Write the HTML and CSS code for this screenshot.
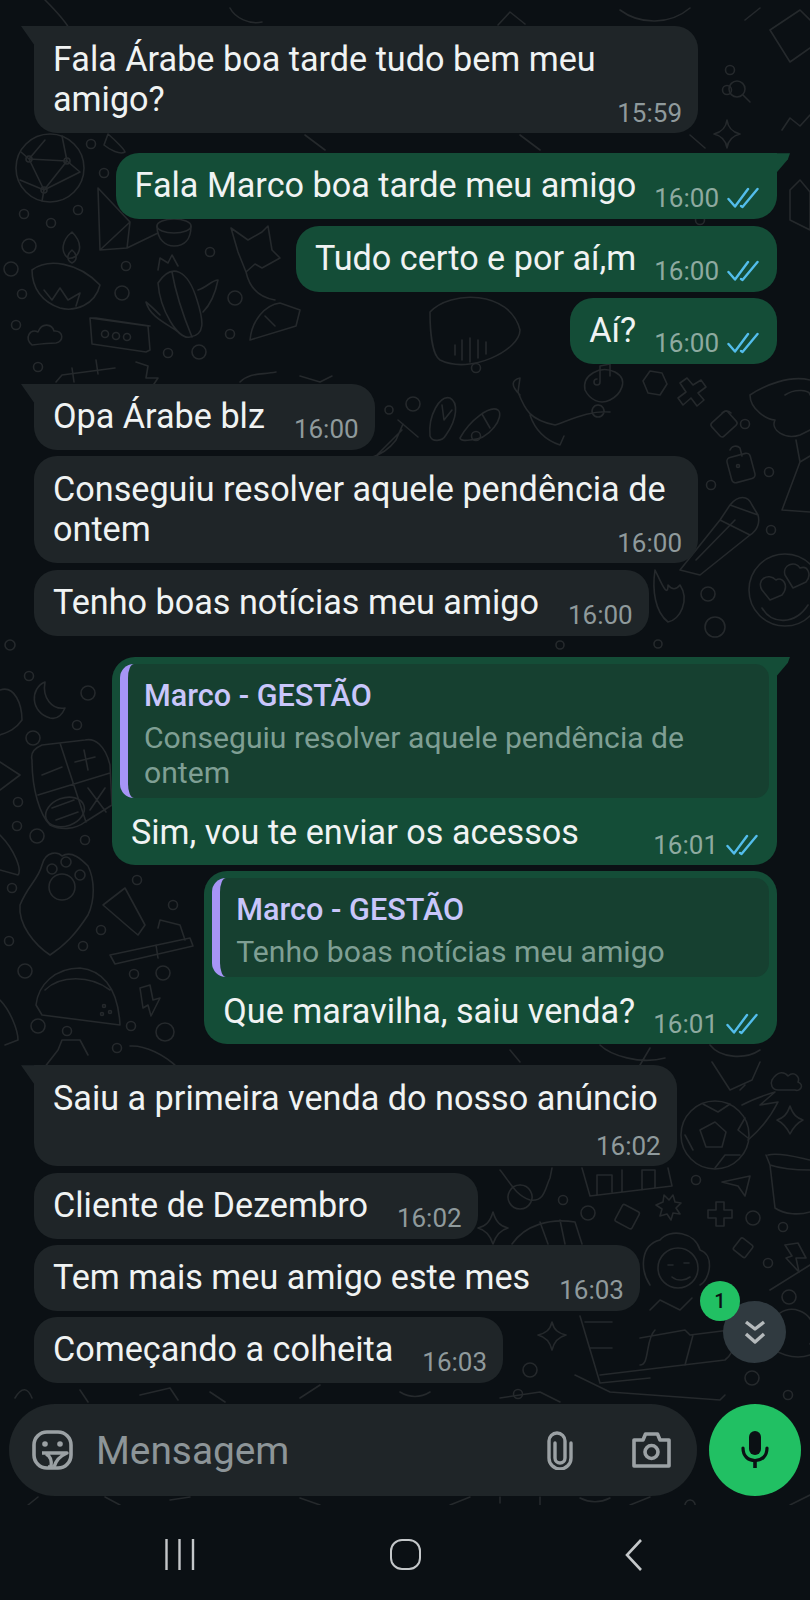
FILE: index.html
```html
<!DOCTYPE html>
<html lang="pt">
<head>
<meta charset="utf-8">
<title>Conversa</title>
<link rel="stylesheet" href="styles.css">
</head>
<body>
<svg width="0" height="0" class="defs">
  <symbol id="ticks" viewBox="0 0 32 22"><path d="M1.5 12 L8 19.5 L21 2 M14 19 L15.5 20 L30.5 2" fill="none" stroke="#53bdeb" stroke-width="2.4" stroke-linecap="round" stroke-linejoin="round"/></symbol>
</svg>
<div class="screen">
  <div class="stage">
    <svg class="wallpaper" viewBox="0 0 810 1505" width="810" height="1505" aria-hidden="true">
      <g fill="none" stroke="#25292c" stroke-width="1.6" stroke-linecap="round" stroke-linejoin="round">
        <!-- small dots -->
        <circle cx="91" cy="144" r="4.5"/><circle cx="104" cy="173" r="4.5"/><circle cx="78" cy="210" r="4.5"/><circle cx="24" cy="214" r="4.5"/><circle cx="51" cy="223" r="4.5"/><circle cx="29" cy="246" r="7"/><circle cx="11" cy="269" r="7"/><circle cx="22" cy="294" r="4.5"/><circle cx="16" cy="325" r="4.5"/><circle cx="38" cy="367" r="4.5"/><circle cx="126" cy="266" r="4.5"/><circle cx="122" cy="293" r="7"/><circle cx="210" cy="252" r="4.5"/><circle cx="235" cy="298" r="7"/><circle cx="230" cy="334" r="4.5"/><circle cx="168" cy="353" r="4.5"/><circle cx="199" cy="352" r="7"/>
        <circle cx="413" cy="404" r="7"/><circle cx="389" cy="410" r="4"/><circle cx="476" cy="368" r="4.5"/><circle cx="476" cy="436" r="4.5"/><circle cx="745" cy="424" r="4.5"/><circle cx="769" cy="472" r="4.5"/><circle cx="711" cy="485" r="4.5"/><circle cx="771" cy="530" r="4.5"/><circle cx="708" cy="594" r="7"/><circle cx="715" cy="627" r="10"/><circle cx="560" cy="645" r="4"/><circle cx="658" cy="644" r="4"/>
        <circle cx="10" cy="645" r="5"/><circle cx="29" cy="676" r="4.5"/><circle cx="88" cy="693" r="7"/><circle cx="77" cy="725" r="4.5"/><circle cx="33" cy="738" r="7"/><circle cx="18" cy="802" r="4.5"/><circle cx="17" cy="826" r="4.5"/><circle cx="37" cy="836" r="7"/><circle cx="85" cy="840" r="4.5"/><circle cx="137" cy="880" r="4.5"/><circle cx="173" cy="905" r="4.5"/><circle cx="12" cy="888" r="4.5"/><circle cx="101" cy="930" r="4.5"/><circle cx="9" cy="941" r="4.5"/><circle cx="83" cy="946" r="4.5"/><circle cx="25" cy="971" r="7"/><circle cx="134" cy="974" r="4.5"/><circle cx="163" cy="973" r="7"/><circle cx="38" cy="1026" r="7"/><circle cx="67" cy="1031" r="4.5"/><circle cx="131" cy="1026" r="4.5"/><circle cx="165" cy="1032" r="9"/><circle cx="117" cy="1048" r="4.5"/>
        <circle cx="696" cy="1180" r="4.5"/><circle cx="563" cy="1200" r="4.5"/><circle cx="588" cy="1213" r="7"/><circle cx="753" cy="1218" r="7"/><circle cx="783" cy="1227" r="4.5"/><circle cx="768" cy="1263" r="4.5"/><circle cx="789" cy="1297" r="7"/><circle cx="530" cy="1370" r="7"/><circle cx="518" cy="1394" r="4.5"/><circle cx="752" cy="1378" r="7"/><circle cx="788" cy="1395" r="4.5"/>
        <circle cx="727" cy="90" r="4.5"/><circle cx="730" cy="70" r="4.5"/><circle cx="700" cy="220" r="4.5"/>
        <!-- globe -->
        <circle cx="50" cy="168" r="34"/><path d="M29 159 L67 161 M20 180 L44 190 L80 172 M29 159 L44 190 M67 161 L44 190 M29 159 L21 152 M29 159 L45 140 M67 161 L62 136 M67 161 L80 172 M44 190 L42 201"/>
        <circle cx="29" cy="159" r="3"/><circle cx="67" cy="161" r="3"/><circle cx="44" cy="190" r="3"/>
        <!-- play triangle and bowl -->
        <path d="M98 188 L130 222 L127 248 L100 250 Z M100 250 L130 222 M127 248 L158 233"/>
        <ellipse cx="174" cy="226" rx="17" ry="7"/><path d="M157 226 C157 240 166 246 174 246 C184 246 191 240 191 226"/>
        <!-- lamp -->
        <path d="M72 232 C62 240 60 252 68 258 C78 260 86 246 72 232 Z M72 250 C67 254 66 260 72 263 C78 260 77 254 72 250 Z"/>
        <path d="M32 270 C48 258 78 262 100 285 C95 305 75 312 60 308 C42 302 32 288 32 270 Z M44 290 L52 300 L60 288 L68 300 L80 293 L76 306"/>
        <!-- cactus -->
        <path d="M158 283 C172 262 188 270 197 300 C204 322 205 335 190 337 C178 340 160 310 158 283 Z M172 272 C176 295 185 320 192 337 M160 315 C155 310 150 305 146 302 C150 318 170 325 178 332 M198 290 C206 288 212 280 218 280 C215 295 210 305 203 312 M158 270 L160 258 L168 263 L172 255 L178 266"/>
        <!-- fox -->
        <path d="M231 228 L248 240 L262 232 L268 226 L272 250 L280 258 L262 268 L255 264 L246 272 L242 262 L238 252 Z M246 272 C250 290 262 298 275 300"/>
        <!-- tail -->
        <path d="M250 340 C252 320 265 305 280 303 L300 310 L296 326 Z M265 316 L275 326"/>
        <!-- chat box -->
        <path d="M90 318 L148 326 L150 350 L146 352 L92 344 Z M90 318 L96 318 L150 326"/><circle cx="105" cy="334" r="3.5"/><circle cx="116" cy="336" r="3.5"/><circle cx="127" cy="337" r="3.5"/>
        <!-- cloud -->
        <path d="M32 345 C24 338 30 328 38 332 C42 322 52 324 54 331 C64 330 64 342 56 343 C48 343 40 344 32 345 Z"/>
        <!-- weights, bolt, lower strip -->
        <path d="M56 382 L62 375 L115 368 M72 368 l2 14 M96 360 l2 14"/><path d="M136 362 L148 366 L146 378 L158 378 L150 390"/>
        <path d="M240 382 C250 372 262 375 276 372 M300 376 L320 382 L332 376"/>
        <!-- audio + note -->
        <path d="M430 312 C450 290 510 290 520 330 C520 350 470 375 440 360 C432 355 430 330 430 312 Z M455 345 v10 M462 340 v20 M470 338 v24 M478 340 v18 M486 342 v12"/><path d="M600 382 v-16 l10 -2 v12 M600 382 a3 3 0 1 1 -3 -3"/>
        <!-- flip flops, flask -->
        <path d="M430 436 C428 415 440 395 450 398 C458 402 458 418 446 435 C442 442 432 442 430 436 Z M442 405 L444 420 L452 410"/><path d="M460 438 C470 420 490 405 498 410 C505 416 490 440 470 440 C464 441 460 440 460 438 Z M482 414 L490 428"/>
        <path d="M377 455 L402 430 M398 420 L418 437 M403 424 L396 440 C390 448 380 455 370 458"/>
        <!-- person arm -->
        <path d="M520 395 C510 385 512 380 520 378 L518 392 C525 410 530 420 555 425 C570 420 590 410 610 412 M530 415 C535 430 545 440 560 445 L564 436 M585 390 C582 375 600 365 615 372 C630 380 620 395 610 400 C600 405 590 400 585 390 Z M598 405 a6 6 0 1 0 0.1 0"/>
        <!-- hexagon, cross -->
        <path d="M643 381 L650 371 L662 373 L667 384 L660 395 L648 393 Z"/>
        <path d="M680 383 l7 -5 l6 7 l8 -5 l5 7 l-8 6 l6 7 l-7 6 l-6 -8 l-8 7 l-5 -7 l8 -6 Z"/>
        <!-- locks -->
        <rect x="713" y="415" width="22" height="18" rx="3" transform="rotate(-42 724 424)"/><path d="M722 413 a6 6 0 0 1 9 0"/>
        <rect x="729" y="455" width="24" height="26" rx="4" transform="rotate(-15 741 468)"/><path d="M730 450 a6 6 0 0 1 10 -2 l2 8"/><circle cx="738" cy="466" r="1.5"/>
        <!-- flower -->
        <path d="M810 380 C790 375 765 385 750 395 C750 410 768 420 775 420 C770 430 785 440 800 435 L810 430 M785 395 C795 388 810 390 810 395 M796 440 L800 462 L782 510 L810 512 M800 462 L810 456"/>
        <!-- pencil -->
        <path d="M680 570 L720 520 L730 505 C738 495 748 495 752 505 L758 515 C760 522 758 530 750 535 L700 575 L680 570 Z M720 520 L750 535 M730 505 L758 515 M696 560 L735 520"/>
        <!-- heart smiley -->
        <circle cx="785" cy="590" r="36"/><path d="M762 590 C756 580 768 572 776 580 C782 576 790 585 782 595 L770 600 Z M785 575 C782 565 795 560 800 568 C808 565 812 575 806 582 L793 588 Z M762 608 C772 625 795 625 808 605"/>
        <!-- flame -->
        <path d="M655 570 C652 590 655 612 668 622 C680 620 690 600 680 585 C676 590 672 590 668 585 C668 600 660 580 655 570 Z"/>
        <!-- moon -->
        <path d="M45 682 C30 688 30 712 50 718 C58 720 62 715 65 708 C52 710 42 698 45 682 Z"/>
        <!-- calculator -->
        <path d="M32 760 C30 752 35 748 42 745 L85 740 C95 738 105 745 110 765 L112 805 L85 822 C75 830 60 830 50 825 C40 815 32 790 32 760 Z M60 743 L86 822 M38 795 L110 773 M42 775 L62 767 M75 762 L95 757 M84 750 L88 770 M88 788 L106 812 M105 788 L90 810"/>
        <ellipse cx="65" cy="812" rx="20" ry="14" transform="rotate(-20 65 812)"/><path d="M52 808 L74 800 M56 820 L78 812"/>
        <!-- left scraps -->
        <path d="M0 690 C15 685 22 705 22 720 C15 730 8 732 0 735"/><path d="M0 762 L20 775 L0 790"/><path d="M0 835 C15 850 22 870 18 875 L0 870"/><path d="M0 1000 C10 1010 18 1030 18 1040 L5 1045"/>
        <!-- paw -->
        <path d="M20 905 C28 885 38 880 42 865 C46 850 58 852 62 856 C72 850 82 860 88 866 C95 880 95 900 88 915 C75 935 65 945 50 955 C35 945 18 925 20 905 Z"/><circle cx="62" cy="887" r="13"/><circle cx="52" cy="869" r="5"/><circle cx="66" cy="862" r="5"/><circle cx="80" cy="875" r="5"/>
        <!-- toothpaste -->
        <path d="M103 905 L125 888 L145 925 L138 935 L132 930 Z"/><path d="M110 955 L190 938 L193 946 L115 964 Z M156 945 L158 958 M158 928 L160 920 L180 925 L185 940"/>
        <!-- taco -->
        <path d="M36 1005 C38 985 55 968 80 968 C100 970 118 985 120 1025 L42 1015 Z M45 990 C60 975 90 975 110 990"/><circle cx="104" cy="1006" r="1.5"/><circle cx="110" cy="1012" r="1.5"/><circle cx="102" cy="1014" r="1.5"/>
        <!-- bolt -->
        <path d="M140 988 L150 985 L153 1000 L160 998 L151 1016 L148 1005 L143 1008 Z"/>
        <!-- lower left scrap -->
        <path d="M44 1068 L58 1050 L62 1040 L80 1040 L88 1055 M130 1046 C145 1045 165 1055 178 1068"/>
        <!-- right top -->
        <path d="M770 30 L800 10 L810 20 M770 30 L790 62 L810 48"/><circle cx="737" cy="89" r="8"/><path d="M743 95 L750 102"/><path d="M727 120 C728 128 732 132 740 134 C732 136 728 140 727 148 C726 140 722 136 714 134 C722 132 726 128 727 120 Z"/><path d="M782 130 L790 118 L800 126 L810 115 M735 165 L752 158 L755 170 M790 190 L800 180 L810 192 L810 230 L790 220 Z"/>
        <!-- top -->
        <path d="M70 30 C65 20 50 5 45 0 M230 8 C235 18 250 25 262 22 M498 25 L510 12 L525 24 M620 10 C640 25 670 25 690 8 M745 20 L760 8"/>
        <!-- between bubbles -->
        <path d="M108 134 C115 140 125 150 125 152 C120 155 110 150 104 145 Z M305 135 L325 150 M520 135 L540 150 M690 135 L705 148"/>
        <!-- football -->
        <circle cx="715" cy="1135" r="34"/><path d="M700 1130 L715 1122 L726 1132 L722 1147 L706 1147 Z M703 1104 L718 1112 L730 1104 M745 1118 L738 1130 L748 1138 M685 1135 L693 1150 M715 1168 L725 1155 L740 1155"/><path d="M742 1105 C755 1098 765 1095 775 1092 L760 1105 L778 1102 C770 1118 760 1130 748 1140"/>
        <!-- sparkle, plane, pot -->
        <path d="M790 1106 C793 1115 797 1118 803 1120 C797 1123 793 1128 790 1134 C787 1128 783 1123 777 1120 C783 1118 787 1115 790 1106 Z"/>
        <path d="M722 1182 L750 1176 L745 1196 L738 1186 Z"/><path d="M768 1155 C780 1152 800 1158 810 1160 M766 1155 L770 1165 C785 1170 800 1170 810 1170 M770 1165 L775 1208 C785 1215 800 1215 810 1212"/>
        <path d="M664 1195 l5 5 l4 -5 l2 7 l6 1 l-5 5 l4 6 l-7 -1 l-2 7 l-4 -6 l-7 2 l2 -7 l-6 -4 l7 -3 Z"/>
        <path d="M708 1210 h8 v-8 h8 v8 h8 v8 h-8 v8 h-8 v-8 h-8 Z"/>
        <rect x="736" y="1240" width="15" height="15" rx="2" transform="rotate(38 743 1247)"/><path d="M785 1245 L798 1243 L806 1258 L796 1258 L799 1272 L786 1258 L792 1256 Z"/><rect x="618" y="1207" width="19" height="19" rx="2" transform="rotate(28 627 1216)"/>
        <!-- person and laptop -->
        <path d="M650 1285 C640 1270 640 1245 660 1240 C670 1228 695 1232 700 1250 C715 1255 710 1280 700 1285"/><circle cx="678" cy="1268" r="20"/><path d="M668 1265 l5 0 M684 1263 l5 0 M672 1277 C678 1282 686 1280 690 1277"/><path d="M650 1310 L660 1300 L680 1310 L692 1298 M655 1330 C645 1340 650 1365 640 1365 M600 1375 L725 1360 C738 1350 735 1330 730 1330 L690 1335 L685 1330 L640 1338 M580 1316 L600 1383 L650 1378 M585 1322 H612 M590 1348 H612 M693 1335 L685 1365 M575 1375 L610 1392 L720 1400 L725 1395"/>
        <!-- stars, house, egg, croissant -->
        <path d="M552 1322 C554 1330 558 1333 566 1335 C558 1337 554 1342 552 1350 C550 1342 546 1337 538 1335 C546 1333 550 1330 552 1322 Z"/><path d="M493 1212 C496 1222 500 1226 508 1228 C500 1230 496 1235 493 1244 C490 1235 486 1230 478 1228 C486 1226 490 1222 493 1212 Z"/>
        <path d="M582 1168 L590 1196 L672 1186 L668 1168 M597 1194 V1175 H612 V1192 M622 1192 V1170 M642 1190 V1170 H655 V1188"/>
        <path d="M500 1170 C510 1182 515 1195 530 1200 C545 1202 545 1188 550 1178 L552 1168 M520 1185 a12 12 0 1 0 0.1 0"/>
        <path d="M512 1244 C525 1225 550 1218 575 1222 L582 1244 M540 1222 L548 1244 M560 1220 L565 1244"/>
        <!-- right of bubble 12 -->
        <path d="M770 1330 a22 22 0 1 1 40 14 M778 1330 a4 4 0 1 0 0.1 0"/><path d="M764 1340 C775 1355 795 1360 810 1355"/>
        <path d="M770 1290 L810 1265 M600 1045 C610 1055 640 1065 665 1058 M510 1050 L520 1062 M640 1065 L650 1048 M710 1045 C720 1058 745 1060 760 1050 M712 1062 L730 1090 L752 1080 L760 1062 M745 1085 L740 1090"/><path d="M772 1080 C778 1070 785 1072 788 1076 C795 1070 800 1078 798 1082 C805 1085 800 1092 795 1090 L778 1090 C772 1090 770 1084 772 1080 Z"/>
        <!-- gap strip above composer -->
        <path d="M15 1398 C22 1386 28 1388 32 1398 M80 1390 L88 1402 M140 1395 L170 1388 L178 1400 M210 1392 L225 1402 M300 1398 L320 1385 M400 1392 C410 1398 420 1398 430 1392 M500 1398 L540 1392 L560 1402"/>
        <path d="M28 1505 L38 1497 M120 1505 L105 1497 M170 1500 L190 1497 M320 1505 L300 1498 M450 1505 L470 1497 M500 1503 V1497 M540 1505 V1497 M580 1498 C590 1503 600 1503 610 1498 M630 1505 L650 1497 M690 1500 a5 5 0 1 0 0.1 0 M790 1505 L810 1495"/>
      </g>
    </svg>

    <main class="chat">
      <div class="msg in tail stack wide">
        <p class="text">Fala Árabe boa tarde tudo bem meu amigo?</p>
        <div class="meta over"><span class="time">15:59</span></div>
      </div>

      <div class="msg out tail row far">
        <p class="text">Fala Marco boa tarde meu amigo</p>
        <div class="meta"><span class="time">16:00</span><svg class="tick"><use href="#ticks"/></svg></div>
      </div>
      <div class="msg out row">
        <p class="text">Tudo certo e por aí,m</p>
        <div class="meta"><span class="time">16:00</span><svg class="tick"><use href="#ticks"/></svg></div>
      </div>
      <div class="msg out row">
        <p class="text">Aí?</p>
        <div class="meta"><span class="time">16:00</span><svg class="tick"><use href="#ticks"/></svg></div>
      </div>

      <div class="msg in tail row far">
        <p class="text">Opa Árabe blz</p>
        <div class="meta"><span class="time">16:00</span></div>
      </div>
      <div class="msg in stack wide">
        <p class="text">Conseguiu resolver aquele pendência de ontem</p>
        <div class="meta over"><span class="time">16:00</span></div>
      </div>
      <div class="msg in row">
        <p class="text">Tenho boas notícias meu amigo</p>
        <div class="meta"><span class="time">16:00</span></div>
      </div>

      <div class="msg out tail reply far-more reply-wide">
        <div class="quote">
          <div class="quote-name">Marco - GESTÃO</div>
          <div class="quote-body">Conseguiu resolver aquele pendência de ontem</div>
        </div>
        <div class="reply-row">
          <p class="text">Sim, vou te enviar os acessos</p>
          <div class="meta"><span class="time">16:01</span><svg class="tick"><use href="#ticks"/></svg></div>
        </div>
      </div>
      <div class="msg out reply">
        <div class="quote">
          <div class="quote-name">Marco - GESTÃO</div>
          <div class="quote-body">Tenho boas notícias meu amigo</div>
        </div>
        <div class="reply-row">
          <p class="text">Que maravilha, saiu venda?</p>
          <div class="meta"><span class="time">16:01</span><svg class="tick"><use href="#ticks"/></svg></div>
        </div>
      </div>

      <div class="msg in tail stack far-more">
        <p class="text">Saiu a primeira venda do nosso anúncio</p>
        <div class="meta under"><span class="time">16:02</span></div>
      </div>
      <div class="msg in row">
        <p class="text">Cliente de Dezembro</p>
        <div class="meta"><span class="time">16:02</span></div>
      </div>
      <div class="msg in row">
        <p class="text">Tem mais meu amigo este mes</p>
        <div class="meta"><span class="time">16:03</span></div>
      </div>
      <div class="msg in row">
        <p class="text">Começando a colheita</p>
        <div class="meta"><span class="time">16:03</span></div>
      </div>
    </main>

    <footer class="composer">
      <div class="field">
        <svg class="ico sticker" viewBox="0 0 41 40"><rect x="2" y="2" width="37" height="36" rx="13" fill="none" stroke="#9ba1a4" stroke-width="3.6"/><circle cx="13" cy="14" r="2.8" fill="#9ba1a4"/><circle cx="28" cy="14" r="2.8" fill="#9ba1a4"/><path d="M10 23 H35 C28 26 24 30 22 37 M14 24 C18 26 20 31 19 37 L16 37" fill="none" stroke="#9ba1a4" stroke-width="3.4" stroke-linejoin="round"/></svg>
        <span class="placeholder">Mensagem</span>
        <svg class="ico clip" viewBox="0 0 26 39"><path d="M24 12 V27 A11 11 0 0 1 2 27 V10 A8 8 0 0 1 18 10 V27 A5 5 0 0 1 8 27 V12" fill="none" stroke="#9ba1a4" stroke-width="3.4" stroke-linecap="round"/></svg>
        <svg class="ico camera" viewBox="0 0 39 36"><path d="M2 8 H11 L13.500 2 H25.500 L28 8 H37 V34 H2 Z" fill="none" stroke="#9ba1a4" stroke-width="3.6" stroke-linejoin="round"/><circle cx="19.500" cy="20" r="6.500" fill="none" stroke="#9ba1a4" stroke-width="3.6"/></svg>
      </div>
      <button class="mic" type="button" aria-label="Gravar">
        <svg viewBox="0 0 28 38" width="28" height="38"><rect x="8" y="0" width="12" height="24" rx="6" fill="#0b1014"/><path d="M2 17 C2 25 7 29.500 14 29.500 C21 29.500 26 25 26 17" fill="none" stroke="#0b1014" stroke-width="3.200" stroke-linecap="round"/><path d="M14 29 V37" stroke="#0b1014" stroke-width="3.600"/></svg>
      </button>
    </footer>

    <div class="scroll-down">
      <svg viewBox="0 0 22 25" width="22" height="25"><path d="M2 2 L11 9 L20 2 M2 14 L11 22 L20 14" fill="none" stroke="#b5babc" stroke-width="3.400" stroke-linejoin="round"/></svg>
      <span class="badge">1</span>
    </div>
  </div>

  <nav class="navbar">
    <svg class="nav-recent" viewBox="0 0 31 31" width="31" height="31"><path d="M2.500 0 V31 M15.500 0 V31 M29 0 V31" stroke="#c4c7c9" stroke-width="2.400"/></svg>
    <span class="nav-home"></span>
    <svg class="nav-back" viewBox="0 0 18 32" width="18" height="32"><path d="M16 1 L2 16 L16 31" fill="none" stroke="#c4c7c9" stroke-width="2.600"/></svg>
  </nav>
</div>
</body>
</html>
```
FILE: styles.css
```css
* { box-sizing: border-box; }
html, body { margin: 0; padding: 0; background: #0b1014; }
body { font-family: Roboto, "Liberation Sans", sans-serif; color: #f0f3f3; }
.defs { position: absolute; }
.screen { width: 810px; height: 1600px; display: flex; flex-direction: column; overflow: hidden; background: #0b1014; }
.stage { position: relative; height: 1505px; flex: none; }
.wallpaper { position: absolute; left: 0; top: 0; display: block; }

.chat { position: relative; display: flex; flex-direction: column; gap: 6.25px; padding: 26px 33px 0 34px; height: 1383px; }

.msg { position: relative; border-radius: 23px; flex: none; }
.in { align-self: flex-start; background: #1f2528; }
.out { align-self: flex-end; background: #144d37; }
.far { margin-top: 14px; }
.far-more { margin-top: 15px; }
.in.tail { border-top-left-radius: 0; }
.out.tail { border-top-right-radius: 0; }
.tail::before { content: ""; position: absolute; top: 0; width: 14px; height: 20px; background: inherit; }
.in.tail::before { left: -13px; clip-path: polygon(0 0, 100% 0, 100% 100%, 80% 80%, 10% 10%); }
.out.tail::before { right: -13px; clip-path: polygon(0 0, 100% 0, 85% 30%, 0 100%); }

.text { margin: 0; font-size: 34.2px; line-height: 40px; }
.row { display: flex; align-items: flex-end; gap: 18px; padding: 12px 16px 14px 19px; }
.in.row { gap: 29px; }
.stack { padding: 13px 16px 5px 19px; display: flex; flex-direction: column; }
.stack .text { margin-right: 3px; }
.wide { width: 664px; }

.meta { display: flex; align-items: center; justify-content: flex-end; gap: 8px; height: 30px; margin-bottom: -8px; flex: none; }
.meta.over { margin: -21px 0 0; }
.meta.under { margin: 13px 0 0; }
.time { font-size: 26px; line-height: 30px; color: #8f9a9c; }
.out .time { color: #8eaaa0; }
.tick { width: 32px; height: 22px; flex: none; display: block; margin-right: 2px; }

.reply { padding: 7px 8px 0; }
.reply-wide { width: 665px; }
.quote { background: #164030; border-left: 8px solid #a695f6; border-radius: 14px; padding: 14px 24px 8px 16px; }
.quote-name { font-size: 30.6px; line-height: 35px; font-weight: 500; color: #c9c6fb; }
.quote-body { font-size: 30.15px; line-height: 35px; margin-top: 7px; color: #7f9f94; }
.reply-row { display: flex; align-items: flex-end; justify-content: space-between; gap: 18px; padding: 14px 9px 13px 11px; }

.composer { display: flex; gap: 12px; margin: 21px 9px 0; height: 92px; position: relative; }
.field { flex: 1; display: flex; align-items: center; border-radius: 46px; background: #1f2528; padding: 0 26px 0 23px; }
.ico { display: block; flex: none; }
.sticker { width: 41px; height: 40px; }
.placeholder { flex: 1; margin-left: 23px; font-size: 38.8px; color: #8d9598; }
.clip { width: 26px; height: 39px; }
.camera { width: 39px; height: 36px; margin-left: 59px; }
.mic { width: 92px; height: 92px; flex: none; border: 0; padding: 0; border-radius: 50%; background: #21c063; display: flex; align-items: center; justify-content: center; }

.scroll-down { position: absolute; left: 723px; top: 1301px; width: 63px; height: 62px; border-radius: 50%; background: #303a40; display: flex; align-items: center; justify-content: center; }
.badge { position: absolute; left: -23px; top: -20px; width: 40px; height: 40px; border-radius: 50%; background: #21c063; color: #0b1014; font-size: 20px; font-weight: 500; display: flex; align-items: center; justify-content: center; }

.navbar { flex: 1; display: flex; align-items: flex-start; padding: 34px 0 0 164px; background: #0b1014; }
.nav-recent { display: block; }
.nav-home { display: block; width: 31px; height: 31px; margin-left: 195px; border: 2.500px solid #c4c7c9; border-radius: 12px; }
.nav-back { display: block; margin-left: 204px; }
```
